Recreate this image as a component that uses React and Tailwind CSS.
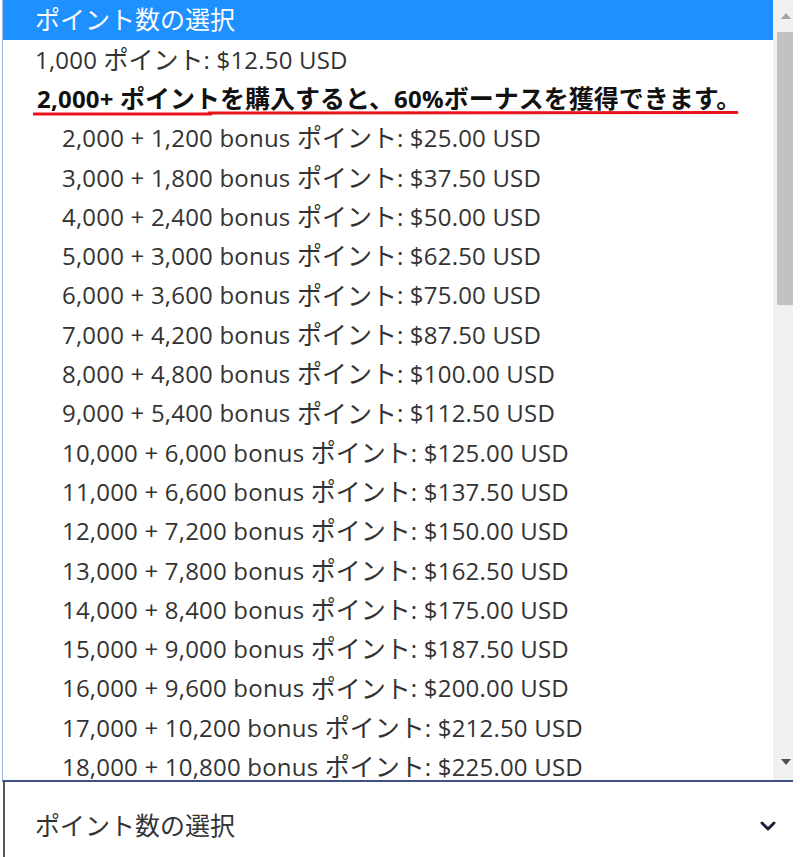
const options = [
  ['2,000', '1,200', '$25.00'],
  ['3,000', '1,800', '$37.50'],
  ['4,000', '2,400', '$50.00'],
  ['5,000', '3,000', '$62.50'],
  ['6,000', '3,600', '$75.00'],
  ['7,000', '4,200', '$87.50'],
  ['8,000', '4,800', '$100.00'],
  ['9,000', '5,400', '$112.50'],
  ['10,000', '6,000', '$125.00'],
  ['11,000', '6,600', '$137.50'],
  ['12,000', '7,200', '$150.00'],
  ['13,000', '7,800', '$162.50'],
  ['14,000', '8,400', '$175.00'],
  ['15,000', '9,000', '$187.50'],
  ['16,000', '9,600', '$200.00'],
  ['17,000', '10,200', '$212.50'],
  ['18,000', '10,800', '$225.00'],
  ['19,000', '11,400', '$237.50'],
];

const font = "font-['Open_Sans','Noto_Sans_CJK_JP',sans-serif]";

// Japanese runs render a little larger than the latin text
function J({ children }) {
  return <span className="text-[25px] tracking-normal">{children}</span>;
}

function Scrollbar() {
  return (
    <div className="flex w-[20px] flex-col bg-[#f0f0f0]">
      <div className="flex h-[32px] items-center justify-center pl-[6px]">
        <svg width="10" height="6" viewBox="0 0 10 6"><path d="M0 6 L5 0 L10 6 Z" fill="#a3a3a3" /></svg>
      </div>
      <div className="ml-[4px] h-[273px] w-[16px] bg-[#c1c1c1]" />
      <div className="flex-1" />
      <div className="flex h-[36px] items-center justify-center pl-[6px]">
        <svg width="10" height="6" viewBox="0 0 10 6"><path d="M0 0 L10 0 L5 6 Z" fill="#505050" /></svg>
      </div>
    </div>
  );
}

export default function App() {
  return (
    <div className={`h-[857px] w-[800px] overflow-hidden bg-white text-[24px] tracking-[0.2px] ${font}`}>
      <div className="relative ml-[2px] flex h-[782px] w-[791px] border-b-2 border-l border-b-[#3f4f85] border-l-[#9db5e3]">
        <div className="flex-1 overflow-hidden">
          <div className="flex h-[40px] items-center bg-[#1e90ff] pl-[32px] text-white"><J>ポイント数の選択</J></div>
          <div className="flex h-[39.3px] items-center whitespace-pre pl-[32px] text-[#333]">
            1,000 <J>ポイント</J>: $12.50 USD
          </div>
          <div className="flex h-[39.3px] items-center whitespace-pre pl-[34px] font-bold text-[#111]">
            2,000+ <J>ポイントを購入すると、</J>60%<J>ボーナスを獲得できます。</J>
          </div>
          {options.map(([base, bonus, price]) => (
            <div key={base} className="flex h-[39.3px] items-center whitespace-pre pl-[59px] text-[#333]">
              {base} + {bonus} bonus <J>ポイント</J>: {price} USD
            </div>
          ))}
        </div>
        <Scrollbar />
        <svg className="pointer-events-none absolute left-[30px] top-[109px]" width="710" height="8" viewBox="0 0 710 8">
          <path d="M1 5 L178 5" stroke="#e8141c" strokeWidth="3" strokeLinecap="round" />
          <path d="M176 4 L704 3.5" stroke="#e8141c" strokeWidth="3" strokeLinecap="round" />
        </svg>
      </div>
      <div className="ml-[3px] flex h-[75px] items-center justify-between border-l-2 border-[#555] pl-[30px] pr-[24px] pt-[12px] text-[#333]">
        <J>ポイント数の選択</J>
        <svg width="16" height="10" viewBox="0 0 16 10">
          <path d="M2 2 L8 8 L14 2" fill="none" stroke="#1b1e3c" strokeWidth="3" strokeLinecap="round" strokeLinejoin="round" />
        </svg>
      </div>
    </div>
  );
}
